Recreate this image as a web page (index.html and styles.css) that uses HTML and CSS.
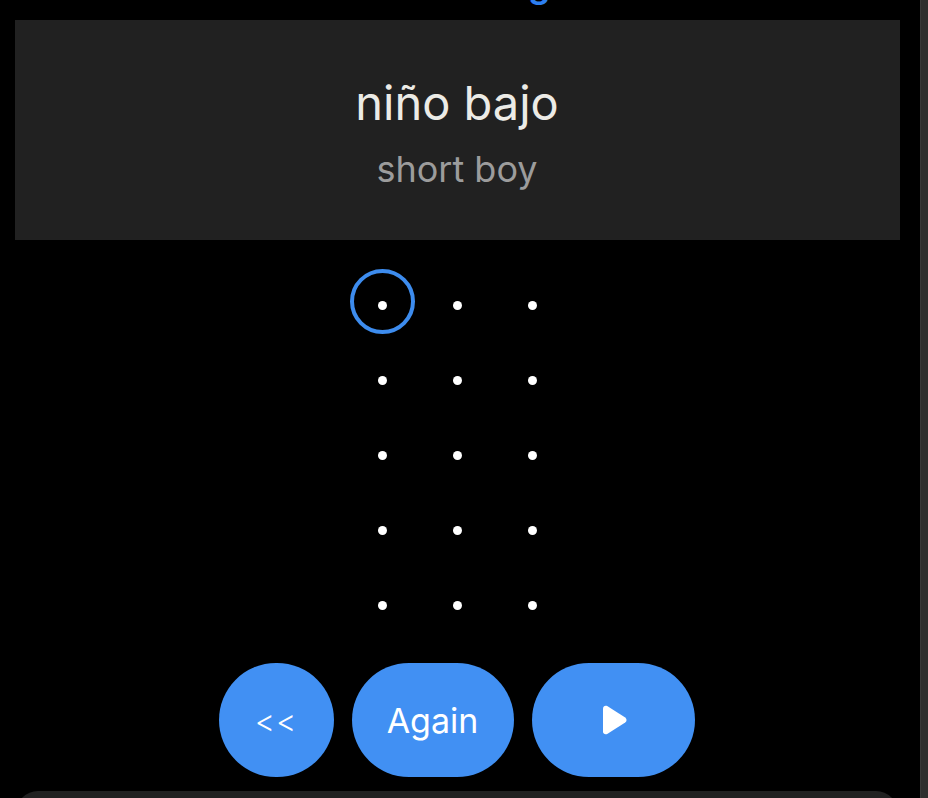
FILE: index.html
```html
<!DOCTYPE html>
<html>
	<head>
		<meta charset="utf-8">
		<title>Flashcard</title>
		<link rel="stylesheet" href="styles.css">
	</head>
	<body>
		<div class="page">
			<div class="main">
				<!-- header text scrolled off the top -->
				<div class="peek"><span>g</span></div>

				<!-- card -->
				<section class="card">
					<h1 class="word">niño bajo</h1>
					<p class="meaning">short boy</p>
				</section>

				<!-- progress dots -->
				<div class="dots">
					<i class="current"></i><i></i><i></i>
					<i></i><i></i><i></i>
					<i></i><i></i><i></i>
					<i></i><i></i><i></i>
					<i></i><i></i><i></i>
				</div>

				<!-- controls -->
				<div class="controls">
					<a href="#" class="btn back">&lt;&lt;</a>
					<a href="#" class="btn again">Again</a>
					<a href="#" class="btn play">
						<svg width="28" height="32" viewBox="0 0 28 32">
							<path d="M3 4.5 C3 2.2 5.2 1 7.2 2.1 L25.2 13.4 C27 14.6 27 17.4 25.2 18.6 L7.2 29.9 C5.2 31 3 29.8 3 27.5 Z" fill="#fff"/>
						</svg>
					</a>
				</div>

				<div class="tray"></div>
			</div>
			<div class="scrollbar"></div>
		</div>
	</body>
</html>
```

FILE: styles.css
```css
* {
	margin: 0;
	padding: 0;
}

body {
	background: #000;
	font-family: Inter, "Liberation Sans", sans-serif;
	height: 798px;
	overflow: hidden;
}

.page {
	display: flex;
	height: 798px;
}

.main {
	width: 921px;
	display: flex;
	flex-direction: column;
	align-items: center;
}

.main > * {
	flex-shrink: 0;
}

.scrollbar {
	width: 7px;
	background: #2f2f2f;
	border-left: 1px solid #3a3a3a;
}

.peek {
	height: 20px;
	width: 100%;
	position: relative;
	overflow: hidden;
}

.peek span {
	position: absolute;
	left: 528px;
	top: -34px;
	color: #2d7ff0;
	font-size: 36px;
	font-weight: 600;
	line-height: 36px;
}

.card {
	width: 885px;
	height: 220px;
	margin-left: -6px;
	background: #212121;
	text-align: center;
	box-sizing: border-box;
	padding-top: 58px;
}

.card .word {
	color: #ecebe6;
	font-size: 47px;
	font-weight: 400;
	line-height: 50px;
}

.card .meaning {
	color: #9c9c9c;
	font-size: 36px;
	line-height: 40px;
	margin-top: 21px;
}

.dots {
	display: grid;
	grid-template-columns: repeat(3, 75px);
	grid-auto-rows: 75px;
	margin-top: 28px;
	margin-left: -5px;
}

.dots i {
	position: relative;
	display: flex;
	align-items: center;
	justify-content: center;
}

.dots i::before {
	content: '';
	width: 9px;
	height: 9px;
	border-radius: 50%;
	background: #fff;
}

.dots .current::after {
	content: '';
	position: absolute;
	width: 57px;
	height: 57px;
	left: 5px;
	top: 1px;
	border: 4px solid #3d8cee;
	border-radius: 50%;
}

.controls {
	display: flex;
	gap: 18px;
	margin-top: 20px;
	margin-left: -7px;
}

.btn {
	height: 114px;
	display: flex;
	align-items: center;
	justify-content: center;
	background: #4190f3;
	color: #fff;
	text-decoration: none;
	border-radius: 57px;
}

.btn.back {
	width: 115px;
	font-size: 31px;
	font-weight: 300;
	letter-spacing: 1px;
}

.btn.again {
	width: 162px;
	font-size: 34px;
}

.btn.play {
	width: 163px;
}

.btn.play svg {
	margin-left: 2px;
}

.tray {
	width: 882px;
	height: 40px;
	margin-top: 14px;
	margin-left: -6px;
	background: #212121;
	border-radius: 22px 22px 0 0;
}
```
